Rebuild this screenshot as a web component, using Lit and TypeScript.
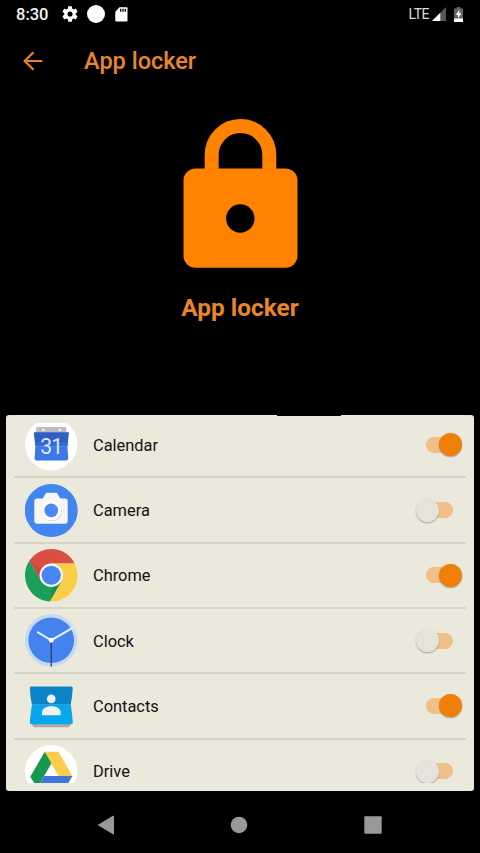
import { html, css, svg, LitElement, TemplateResult } from "lit";
import { customElement, property, state } from "lit/decorators.js";
import { classMap } from "lit/directives/class-map.js";

interface AppEntry {
  name: string;
  icon: TemplateResult;
  locked: boolean;
}

const calendarIcon = svg`
  <circle cx="26" cy="26" r="26" fill="#fff" />
  <path d="M11.5 9h29l1 7h-31z" fill="#bcbcbe" />
  <circle cx="18" cy="11.8" r="1.3" fill="#f1f1f1" />
  <circle cx="34.5" cy="11.8" r="1.3" fill="#f1f1f1" />
  <path d="M9.3 14h33.6q.7 0 .6.8L42 28H10.3L8.7 14.8q-.1-.8.6-.8z" fill="#2f5fc4" />
  <path d="M10.3 27.9H42l.8 12.3q0 1.8-1.8 1.8H11.3q-1.8 0-1.8-1.8z" fill="#3a78e4" />
  <path d="M10 24h32.400l-.4 4H10.300z" fill="#346bd4" />
  <text x="26" y="36" text-anchor="middle" font-family="Roboto, sans-serif"
    font-size="21" font-weight="400" letter-spacing="-1" fill="#d9e6fb">31</text>`;

const cameraIcon = svg`
  <circle cx="26" cy="26.2" r="26.2" fill="#4285ee" />
  <path d="M12 14.3h5.5l3.5-5.6h10.5l3.5 5.6h4.5q2.8 0 2.8 2.8v19.4q0 2.8-2.8 2.8H12q-2.8 0-2.8-2.8V17.1q0-2.8 2.8-2.8z" fill="#f5f6f5" />
  <circle cx="26.5" cy="27" r="10" fill="#dcdfe2" />
  <circle cx="26" cy="26.2" r="9.8" fill="#fff" />
  <circle cx="26" cy="26.2" r="6.8" fill="#4a8af0" />`;

const chromeIcon = svg`
  <path d="M4.3 11.7A26 26 0 0 1 49.2 14.3H26L15.9 31.850z" fill="#d94f43" />
  <path d="M49.2 14.3A26 26 0 0 1 24.5 52L36.1 31.850 26 14.3z" fill="#fbce49" />
  <path d="M24.5 52A26 26 0 0 1 4.3 11.7L15.9 31.850H36.1z" fill="#1c9e5c" />
  <path d="M4.3 11.7L15.9 31.850 17 20z" fill="#b8402f" opacity=".35" />
  <path d="M36.1 31.850L24.5 52 28 36z" fill="#0f7d45" opacity=".4" />
  <circle cx="26" cy="26" r="11.6" fill="#f3f5f5" />
  <circle cx="26" cy="26" r="9.5" fill="#4886f2" />`;

const clockIcon = svg`
  <circle cx="26" cy="26" r="26" fill="#c3d9ee" />
  <circle cx="26" cy="26" r="22.6" fill="#4482ee" />
  <path d="M26 26V52" stroke="#273a5e" stroke-width="1.2" />
  <path d="M12 17.6L26 26 48 13.3" fill="none" stroke="#e4f0fc" stroke-width="2" />
  <circle cx="26" cy="26" r="2.4" fill="#fff" />`;

const contactsIcon = svg`
  <path d="M6 43h40l-1.5 3.4q-.5 1.3-2 1.3H9.5q-1.5 0-2-1.3z" fill="#aeaaa2" />
  <path d="M6.3 7.4h39.6q1.7 0 1.4 1.8-.6 9-2 16.4H6.9Q5.2 18 4.8 9.2 4.6 7.4 6.3 7.4z" fill="#0c84c8" />
  <path d="M6.9 25.4h38.4q1.3 8 2.1 17.2.2 2.2-2 2.2H6.7q-2.2 0-2-2.2.8-9 2.2-17.2z" fill="#08a6ee" />
  <circle cx="26" cy="19.7" r="4.3" fill="#eef3f2" />
  <path d="M16.8 35.8v-2.6c0-3.6 4-6.2 9.3-6.2s9.3 2.6 9.3 6.2v2.6z" fill="#eef3f2" />`;

const driveIcon = svg`
  <circle cx="26" cy="26" r="26" fill="#fff" />
  <path d="M19.5 6.8h13.6L47 31H33.3z" fill="#fbcc48" />
  <path d="M19.5 6.8L26.2 18 12.2 42.5 5.2 31.5z" fill="#17984f" />
  <path d="M19 30.7h28L40 42.5H12.2z" fill="#3f76dc" />`;

@customElement("lock-switch")
export class LockSwitch extends LitElement {
  @property({ type: Boolean, reflect: true }) on = false;

  render() {
    return html`<div class=${classMap({ track: true, on: this.on })}><div class="thumb"></div></div>`;
  }

  static get styles() {
    return css`
      :host {
        display: block;
      }
      .track {
        display: flex;
        align-items: center;
        width: 27px;
        height: 16px;
        border-radius: 8px;
        background: #f0c08a;
      }
      .thumb {
        flex: none;
        width: 23px;
        height: 23px;
        margin-left: -10px;
        border-radius: 50%;
        background: #e6e4da;
        box-shadow: 0 1px 1.5px rgba(0, 0, 0, 0.3);
      }
      .on .thumb {
        margin-left: 13px;
        background: #ef7f06;
      }
    `;
  }
}

@customElement("app-root")
export class AppRoot extends LitElement {
  @state() apps: AppEntry[] = [
    { name: "Calendar", icon: calendarIcon, locked: true },
    { name: "Camera", icon: cameraIcon, locked: false },
    { name: "Chrome", icon: chromeIcon, locked: true },
    { name: "Clock", icon: clockIcon, locked: false },
    { name: "Contacts", icon: contactsIcon, locked: true },
    { name: "Drive", icon: driveIcon, locked: false },
  ];

  toggle(app: AppEntry) {
    this.apps = this.apps.map((a) => (a === app ? { ...a, locked: !a.locked } : a));
  }

  render() {
    return html`
      <div class="status">
        <span class="time">8:30</span>
        <svg width="16" height="16" viewBox="2 2 20 20">
          <path fill="#fff" fill-rule="evenodd" d="M19.14 12.94c.04-.3.06-.61.06-.94s-.02-.64-.07-.94l2.03-1.58a.49.49 0 0 0 .12-.61l-1.92-3.32a.49.49 0 0 0-.59-.22l-2.39.96a7 7 0 0 0-1.62-.94l-.36-2.54a.48.48 0 0 0-.48-.41h-3.84a.48.48 0 0 0-.47.41l-.36 2.54a7.4 7.4 0 0 0-1.62.94l-2.39-.96a.48.48 0 0 0-.59.22L2.74 8.87a.48.48 0 0 0 .12.61l2.03 1.58a6 6 0 0 0-.02 1.88l-2.03 1.58a.49.49 0 0 0-.12.61l1.92 3.32c.12.22.37.29.59.22l2.39-.96c.5.38 1.03.7 1.62.94l.36 2.54c.05.24.24.41.48.41h3.84c.24 0 .44-.17.47-.41l.36-2.54a7.4 7.4 0 0 0 1.62-.94l2.39.96c.22.08.47 0 .59-.22l1.92-3.32a.48.48 0 0 0-.12-.61zM12 15.2a3.2 3.2 0 1 1 0-6.4 3.2 3.2 0 0 1 0 6.4z" />
        </svg>
        <div class="dot"></div>
        <svg width="13" height="15" viewBox="0 0 13 15">
          <path fill="#fff" d="M4.5.3h7q1 0 1 1v12.2q0 1-1 1H1.3q-1 0-1-1V4.7z" />
          <path stroke="#000" stroke-width="1.3" d="M5.7 1.7v3M8 1.7v3M10.3 1.7v3" />
        </svg>
        <span class="lte">LTE</span>
        <svg class="signal" width="14" height="14" viewBox="0 0 14 14">
          <path fill="#555" d="M14 0v14H0z" />
          <path fill="#fff" d="M8.3 5.7V14H0z" />
        </svg>
        <svg width="9" height="15" viewBox="0 0 9 15">
          <path fill="#666" d="M2.7 0h3.6v1.5H9V15H0V1.5h2.7z" />
          <path fill="#fff" d="M0 11.5h9V15H0zM5.3 2.7L1.8 8h2.3v3.5L7.4 6.3H5.3z" />
        </svg>
      </div>

      <div class="toolbar">
        <svg width="20" height="20" viewBox="0 0 20 20">
          <path fill="none" stroke="#e8852a" stroke-width="2.2" d="M19.3 10H2M10.5 1.3L1.7 10l8.8 8.7" />
        </svg>
        <h1>App locker</h1>
      </div>

      <div class="hero">
        <svg width="115" height="151" viewBox="183 118 115 151">
          <path fill="none" stroke="#ff8201" stroke-width="14" d="M211.7 172v-17.2a28.8 28.8 0 0 1 57.6 0V172" />
          <rect x="183.5" y="168.5" width="114" height="99.2" rx="12" fill="#ff8201" />
          <circle cx="240.3" cy="218.5" r="14.2" />
        </svg>
        <h2>App locker</h2>
      </div>

      <div class="card">
        <div class="notch"></div>
        <div class="list">
          ${this.apps.map(
            (app) => html`
              <div class="row">
                <svg width="53" height="53" viewBox="0 0 52.5 52.5">${app.icon}</svg>
                <span class="name">${app.name}</span>
                <lock-switch ?on=${app.locked} @click=${() => this.toggle(app)}></lock-switch>
              </div>
            `
          )}
        </div>
      </div>

      <div class="nav">
        <svg width="18" height="20" viewBox="0 0 18 20"><path fill="#999" d="M.5 10L16 .8q1-.5 1 .5v17.4q0 1-1 .5z" /></svg>
        <svg width="18" height="18" viewBox="0 0 18 18"><circle cx="9" cy="9" r="8.3" fill="#999" /></svg>
        <svg width="18" height="18" viewBox="0 0 18 18"><rect x=".3" y=".3" width="17.4" height="17.4" rx="1" fill="#999" /></svg>
      </div>
    `;
  }

  static get styles() {
    return css`
      :host {
        display: flex;
        flex-direction: column;
        width: 480px;
        height: 853px;
        overflow: hidden;
        background: #000;
        font-family: Roboto, sans-serif;
      }
      svg {
        display: block;
        flex: none;
      }
      .status {
        display: flex;
        align-items: center;
        height: 28px;
        padding: 0 17px 0 16px;
        box-sizing: border-box;
        color: #f4f4f4;
      }
      .time {
        width: 46px;
        padding-top: 1px;
        font-size: 16.5px;
        font-weight: 500;
      }
      .dot {
        width: 18px;
        height: 18px;
        margin: 0 10px 0 9px;
        border-radius: 50%;
        background: #fff;
      }
      .lte {
        margin-left: auto;
        font-size: 14px;
        letter-spacing: -0.5px;
        color: #ddd;
      }
      .signal {
        margin: 0 8px 0 3px;
      }
      .toolbar {
        display: flex;
        align-items: center;
        gap: 41px;
        height: 65px;
        padding-left: 23px;
      }
      h1,
      h2 {
        margin: 0;
        color: #ea862a;
      }
      h1 {
        padding-top: 1px;
        font-size: 23.5px;
        font-weight: 500;
      }
      h2 {
        margin-top: 24px;
        font-size: 24.4px;
        line-height: 30px;
        font-weight: 700;
      }
      .hero {
        display: flex;
        flex-direction: column;
        align-items: center;
        height: 322px;
        padding-top: 25px;
        box-sizing: border-box;
      }
      .card {
        position: relative;
        height: 376px;
        margin: 0 6px;
        padding: 8px;
        box-sizing: border-box;
        border-radius: 3px;
        background: #ebe9dc;
      }
      .notch {
        position: absolute;
        top: 0;
        left: 271px;
        width: 64px;
        height: 1px;
        background: #000;
      }
      .list {
        display: flex;
        flex-direction: column;
        height: 360px;
        overflow: hidden;
      }
      .row {
        display: flex;
        flex: none;
        align-items: center;
        height: 65.3px;
        padding: 0 13px 0 11px;
        box-sizing: border-box;
        border-bottom: 2px solid #d6d4c9;
      }
      .row:first-child {
        margin-top: -9.9px;
      }
      .name {
        flex: 1;
        margin-left: 15px;
        padding-top: 1px;
        font-size: 16.4px;
        color: #111;
      }
      .nav {
        display: flex;
        flex: 1;
        align-items: center;
        justify-content: space-between;
        padding: 6px 98.5px 0 97px;
      }
    `;
  }
}
